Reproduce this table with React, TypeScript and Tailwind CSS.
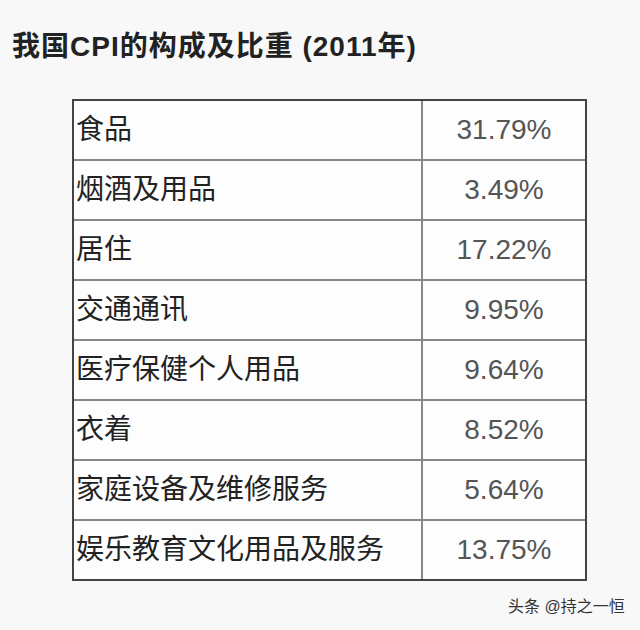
import React from 'react';

const rows: [string, string][] = [
  ['食品', '31.79%'],
  ['烟酒及用品', '3.49%'],
  ['居住', '17.22%'],
  ['交通通讯', '9.95%'],
  ['医疗保健个人用品', '9.64%'],
  ['衣着', '8.52%'],
  ['家庭设备及维修服务', '5.64%'],
  ['娱乐教育文化用品及服务', '13.75%'],
];

const font = { fontFamily: '"Liberation Sans", "Noto Sans CJK SC", sans-serif' };

export default function App() {
  return (
    <div className="w-[640px] h-[630px] bg-[#f8f8f8] relative overflow-hidden" style={font}>
      {/* Title */}
      <h1 className="pt-[33px] pl-[12px] text-[28px] leading-[28px] font-bold text-[#222] tracking-[1px]">
        我国CPI的构成及比重 (2011年)
      </h1>

      {/* Table */}
      <div className="mt-[38px] ml-[72px] w-[515px] border-2 border-[#444] bg-[#fdfdfd]">
        {rows.map(([name, pct], i) => (
          <div
            key={name}
            className={i === 0 ? 'flex h-[58px]' : 'flex h-[60px] border-t-2 border-[#888]'}
          >
            <div className="w-[349px] border-r-2 border-[#888] flex items-center pl-[2px] text-[28px] text-[#222]">
              {name}
            </div>
            <div className="flex-1 flex items-center justify-center text-[28px] text-[#555]">
              {pct}
            </div>
          </div>
        ))}
      </div>

      {/* Watermark */}
      <div className="absolute left-[508px] top-[597px] text-[16px] leading-[20px] text-[#333]">
        头条 @持之一恒
      </div>
    </div>
  );
}
